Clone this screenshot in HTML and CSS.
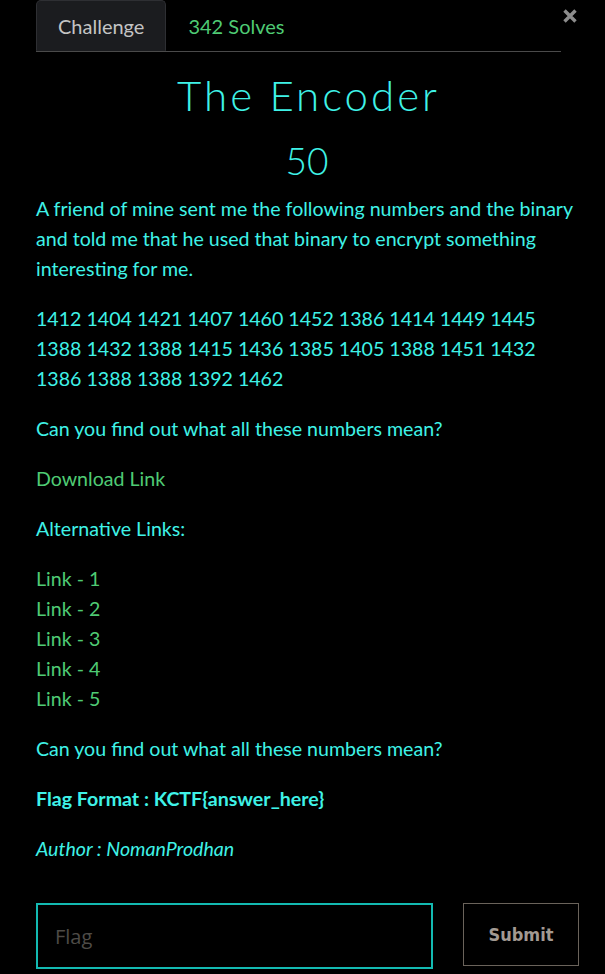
FILE: index.html
```html
<!DOCTYPE html>
<html lang="en">
<head>
<meta charset="utf-8">
<title>The Encoder</title>
<link rel="stylesheet" href="styles.css">
</head>
<body>
<div class="modal">
  <button class="close" aria-label="Close"><svg width="14" height="14" viewBox="0 0 14 14"><path d="M1.5 1.5 L12.5 12.5 M12.5 1.5 L1.5 12.5" stroke="#8c8c8c" stroke-width="3.4" stroke-linecap="butt"/></svg></button>
  <div class="tabs">
    <div class="tab active">Challenge</div>
    <div class="tab solves">342 Solves</div>
  </div>
  <h1 class="title">The Encoder</h1>
  <div class="points">50</div>
  <div class="desc">
    <p>A friend of mine sent me the following numbers and the binary and told me that he used that binary to encrypt something interesting for me.</p>
    <p>1412 1404 1421 1407 1460 1452 1386 1414 1449 1445 1388 1432 1388 1415 1436 1385 1405 1388 1451 1432 1386 1388 1388 1392 1462</p>
    <p>Can you find out what all these numbers mean?</p>
    <p><a class="link" href="#">Download Link</a></p>
    <p>Alternative Links:</p>
    <p><a class="link" href="#">Link - 1</a><br><a class="link" href="#">Link - 2</a><br><a class="link" href="#">Link - 3</a><br><a class="link" href="#">Link - 4</a><br><a class="link" href="#">Link - 5</a></p>
    <p>Can you find out what all these numbers mean?</p>
    <p><strong>Flag Format : KCTF{answer_here}</strong></p>
    <p><em>Author : NomanProdhan</em></p>
  </div>
  <form class="submit-row">
    <input class="flag" type="text" placeholder="Flag">
    <button class="submit" type="button">Submit</button>
  </form>
</div>
</body>
</html>
```
FILE: styles.css
```css
html, body {
  margin: 0;
  padding: 0;
  background: #000;
}
body {
  font-family: "Lato", "Liberation Sans", sans-serif;
}
.modal {
  position: relative;
  width: 545px;
  padding: 0 24px 0 36px;
}
.close {
  position: absolute;
  top: 9px;
  left: 563px;
  width: 14px;
  height: 14px;
  background: none;
  border: none;
  padding: 0;
  cursor: pointer;
}
.close svg {
  display: block;
}
.tabs {
  display: flex;
  width: 525px;
  border-bottom: 1px solid #4a4a4a;
  height: 51px;
}
.tab {
  font-size: 20px;
  line-height: 51px;
  padding: 0 21px;
  margin-bottom: -1px;
  border: 1px solid transparent;
  border-top-left-radius: 5px;
  border-top-right-radius: 5px;
}
.tab.active {
  background: #1b1c1f;
  color: #c4c4c4;
  border-color: #2e2f33;
  border-bottom-color: #1b1c1f;
  height: 51px;
  box-sizing: border-box;
}
.tab.solves {
  color: #4fcb74;
}
.title {
  width: 542px;
  margin: 18px 0 0;
  padding-left: 3px;
  box-sizing: border-box;
  text-align: center;
  font-family: "Lato", sans-serif;
  font-weight: 300;
  font-size: 42px;
  line-height: 50px;
  letter-spacing: 3px;
  color: #3ff2e7;
}
.points {
  width: 542px;
  margin-top: 19px;
  text-align: center;
  font-weight: 300;
  font-size: 37px;
  line-height: 44px;
  color: #3ff2e7;
}
.desc {
  margin-top: 11px;
  color: #3ff2e7;
  font-size: 19.6px;
  line-height: 30px;
}
.desc p {
  margin: 0 0 20px;
}
.desc strong {
  font-weight: 700;
}
.link {
  color: #4fcb74;
  text-decoration: none;
}
.submit-row {
  display: flex;
  gap: 30px;
  margin: 39px 0 0;
  align-items: flex-start;
}
.flag {
  width: 397px;
  height: 66px;
  box-sizing: border-box;
  background: #000;
  border: 2px solid #13bab2;
  padding: 0 17px;
  font-family: "Open Sans", sans-serif;
  font-size: 20px;
  color: #ccc;
  outline: none;
}
.flag::placeholder {
  color: #4e4b47;
}
.submit {
  width: 116px;
  height: 63px;
  box-sizing: border-box;
  background: #000;
  border: 1px solid #6a635b;
  color: #a39a92;
  font-family: "DejaVu Sans Condensed", "DejaVu Sans", sans-serif;
  font-weight: bold;
  font-size: 18px;
  padding: 0;
}
```
